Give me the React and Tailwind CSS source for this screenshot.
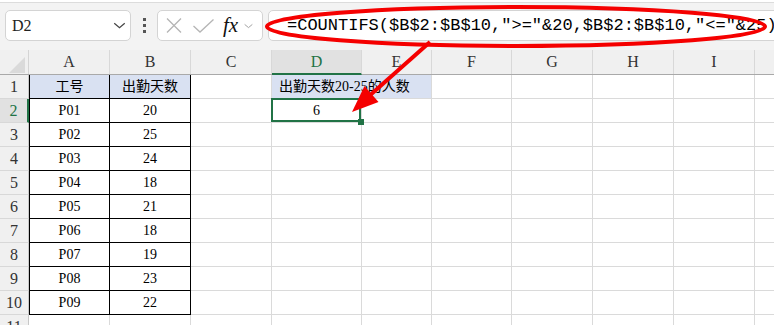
import React from "react";

const cols = [
  { k: "A", w: "w-[81px]" },
  { k: "B", w: "w-[81px]" },
  { k: "C", w: "w-[81px]" },
  { k: "D", w: "w-[90px]" },
  { k: "E", w: "w-[70px]" },
  { k: "F", w: "w-[80px]" },
  { k: "G", w: "w-[81px]" },
  { k: "H", w: "w-[81px]" },
  { k: "I", w: "w-[81px]" },
  { k: "J", w: "w-[40px]" },
];

const table = [
  ["工号", "出勤天数"],
  ["P01", "20"],
  ["P02", "25"],
  ["P03", "24"],
  ["P04", "18"],
  ["P05", "21"],
  ["P06", "18"],
  ["P07", "19"],
  ["P08", "23"],
  ["P09", "22"],
];

const serif = "font-['Liberation_Serif',serif]";
const cellFont = "font-['Liberation_Serif','Noto_Sans_CJK_SC',serif] text-[14px] text-black";

const Chevron = ({ className }) => (
  <svg className={className} viewBox="0 0 14 8" fill="none">
    <path d="M1 1.5 L7 6.5 L13 1.5" stroke="currentColor" strokeWidth="1.4" />
  </svg>
);

const Toolbar = () => (
  <div className="h-[50px] bg-[#f3f3f3]">
    <div className="h-[3px] bg-white border-b border-[#dcdcdc]" />
    <div className="flex items-center pt-[7px] pl-[5px]">
      {/* name box */}
      <div className="w-[126px] shrink-0 h-[31px] bg-white border border-[#d4d4d4] rounded-[5px] flex items-center justify-between pl-[6px] pr-[4px]">
        <span className={`${serif} text-[16px] text-[#222]`}>D2</span>
        <Chevron className="w-[13px] h-[7px] text-[#444]" />
      </div>
      {/* dots */}
      <div className="ml-[12px] shrink-0 flex flex-col gap-[3px]">
        <div className="w-[3px] h-[3px] bg-[#555]" />
        <div className="w-[3px] h-[3px] bg-[#555]" />
        <div className="w-[3px] h-[3px] bg-[#555]" />
      </div>
      {/* buttons */}
      <div className="ml-[11px] shrink-0 w-[106px] h-[31px] bg-white border border-[#d4d4d4] rounded-[5px] flex items-center pl-[8px]">
        <svg className="w-[16px] h-[15px]" viewBox="0 0 16 15" fill="none">
          <path d="M1 0.5 L15 14.5 M15 0.5 L1 14.5" stroke="#b5b5b5" strokeWidth="1.3" />
        </svg>
        <svg className="ml-[11px] w-[21px] h-[14px]" viewBox="0 0 21 14" fill="none">
          <path d="M0.5 7 L7 13 L20.5 0.5" stroke="#b5b5b5" strokeWidth="1.3" />
        </svg>
        <span className={`${serif} ml-[9px] italic text-[21px] leading-none text-[#111]`}>
          fx
        </span>
        <Chevron className="ml-[6px] w-[9px] h-[6px] text-[#999]" />
      </div>
      {/* formula */}
      <div className="ml-[5px] w-[540px] shrink-0 h-[31px] bg-white border border-[#d4d4d4] rounded-[5px] flex items-center pl-[18px]">
        <span className="font-['Liberation_Mono',monospace] text-[17px] text-black whitespace-nowrap">
          =COUNTIFS($B$2:$B$10,"&gt;="&amp;20,$B$2:$B$10,"&lt;="&amp;25)
        </span>
      </div>
    </div>
  </div>
);

const HeaderRow = () => (
  <div className="flex h-[25px] bg-[#f0f0f0] border-b border-[#a9a9a9]">
    <div className="w-[29px] shrink-0 relative border-r border-[#d4d4d4]">
      <svg className="absolute right-[3px] bottom-[1px] w-[16px] h-[16px]" viewBox="0 0 16 16">
        <path d="M16 0 L16 16 L0 16 Z" fill="#dadada" />
      </svg>
    </div>
    {cols.map((c) => {
      const sel = c.k === "D";
      return (
        <div
          key={c.k}
          className={`${c.w} shrink-0 flex items-center justify-center border-r border-[#d8d8d8] ${serif} text-[16px] ${
            sel ? "bg-[#e1e1e1] text-[#217346] border-b-2 border-b-[#217346] -mb-px" : "text-[#333]"
          }`}
        >
          {c.k === "J" ? "" : c.k}
        </div>
      );
    })}
  </div>
);

const RowHeader = ({ n }) => {
  const sel = n === 2;
  return (
    <div
      className={`w-[29px] shrink-0 flex items-center justify-center border-b border-[#d8d8d8] ${serif} text-[16px] ${
        sel ? "bg-[#e1e1e1] text-[#217346] border-r-2 border-r-[#217346]" : "bg-[#f0f0f0] text-[#333] border-r border-r-[#c8c8c8]"
      }`}
    >
      {n}
    </div>
  );
};

const Row = ({ n }) => {
  const data = table[n - 1];
  const head = n === 1;
  return (
    <div className="flex h-6">
      <RowHeader n={n} />
      {cols.map((c) => {
        if (data && (c.k === "A" || c.k === "B")) {
          const v = c.k === "A" ? data[0] : data[1];
          return (
            <div
              key={c.k}
              className={`${c.w} shrink-0 flex items-center justify-center border-r border-b border-black ${
                c.k === "A" ? "border-l" : ""
              } ${head ? "bg-[#d9e1f2]" : "bg-white"} ${cellFont}`}
            >
              {v}
            </div>
          );
        }
        if (n === 1 && c.k === "D") {
          return (
            <div
              key="DE"
              className={`w-[160px] shrink-0 flex items-center pl-[7px] bg-[#d9e1f2] border-r border-b border-[#dadada] whitespace-nowrap ${cellFont}`}
            >
              出勤天数20-25的人数
            </div>
          );
        }
        if (n === 1 && c.k === "E") return null;
        if (n === 2 && c.k === "D") {
          return (
            <div
              key={c.k}
              className={`${c.w} shrink-0 relative flex items-center justify-center border-r border-b border-[#dadada] ${cellFont}`}
            >
              6
              <div className="absolute -left-px -top-px right-0 bottom-0 border-2 border-[#217346]" />
              <div className="absolute -right-[3px] -bottom-[3px] w-[6px] h-[6px] bg-[#217346]" />
            </div>
          );
        }
        return (
          <div
            key={c.k}
            className={`${c.w} shrink-0 border-r border-b border-[#dadada] bg-white`}
          />
        );
      })}
    </div>
  );
};

const Annotation = () => (
  <svg
    className="absolute left-0 top-0 pointer-events-none"
    width="774"
    height="325"
    viewBox="0 0 774 325"
    fill="none"
  >
    <ellipse cx="516" cy="26.5" rx="249" ry="19.5" stroke="#f50000" strokeWidth="4" />
    <line x1="430" y1="42" x2="368" y2="97" stroke="#f50000" strokeWidth="4" />
    <polygon points="352,112 378.5,102 364.5,86" fill="#f50000" />
  </svg>
);

export default function App() {
  return (
    <div className="relative w-[774px] h-[325px] overflow-hidden bg-white">
      <Toolbar />
      <HeaderRow />
      {[1, 2, 3, 4, 5, 6, 7, 8, 9, 10, 11].map((n) => (
        <Row key={n} n={n} />
      ))}
      <Annotation />
    </div>
  );
}
